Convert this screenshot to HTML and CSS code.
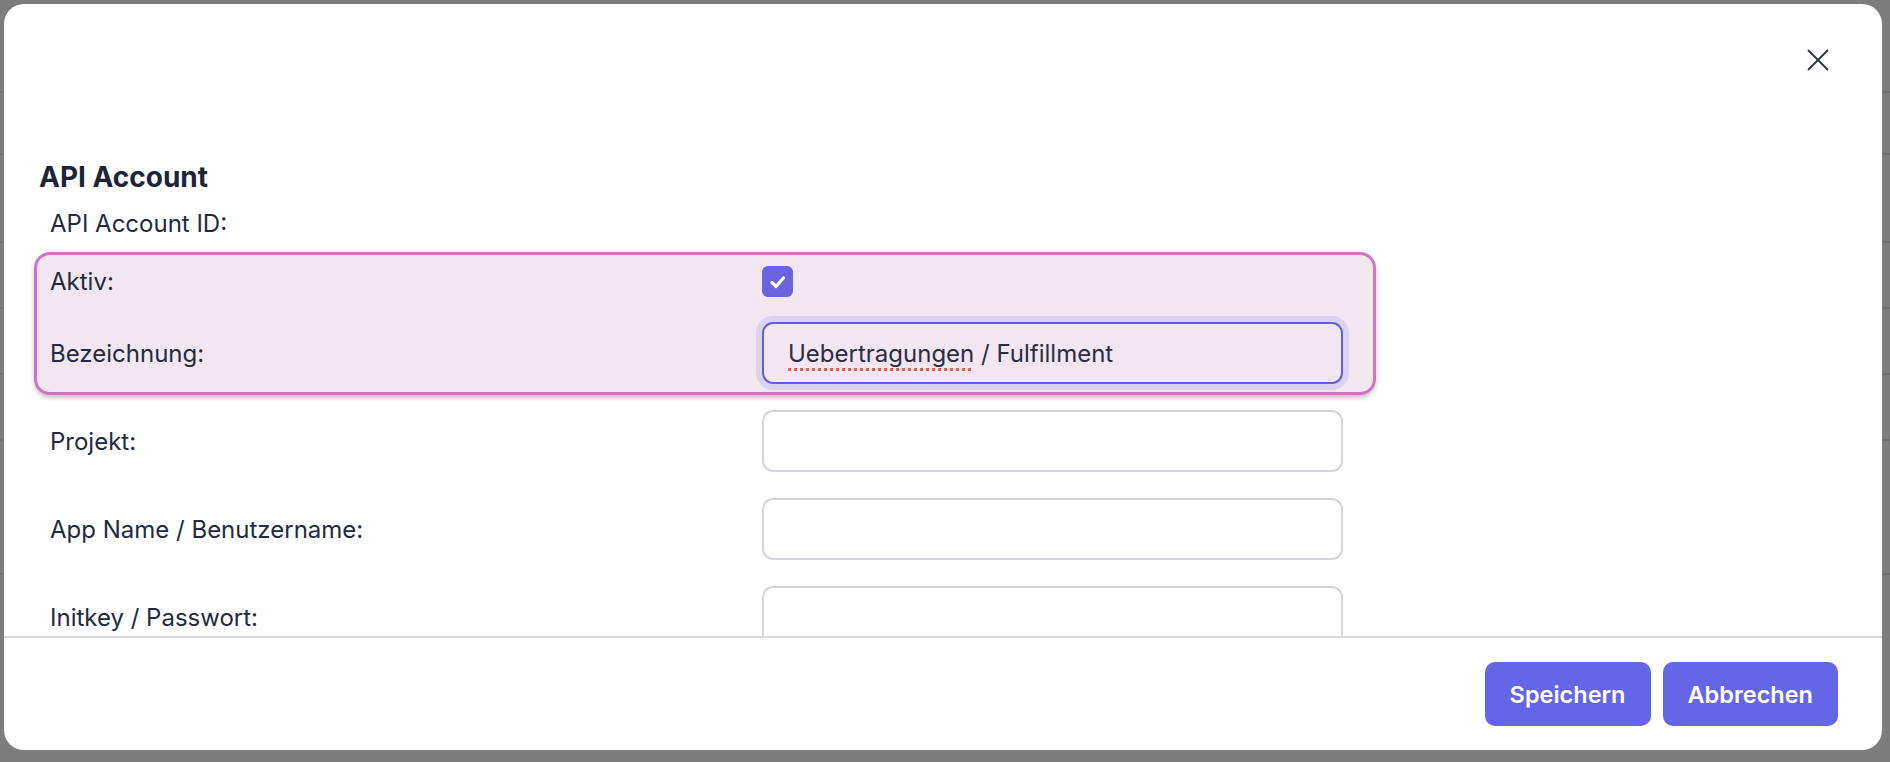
FILE: index.html
```html
<!DOCTYPE html>
<html lang="de">
<head>
    <meta charset="UTF-8">
    <meta name="viewport" content="width=device-width, initial-scale=1.0">
    <title>API Account</title>
    <link rel="stylesheet" href="styles.css">
</head>
<body>
    <div class="page-rows">
        <div class="page-row r1"></div>
        <div class="page-row r2"></div>
        <div class="page-row r3"></div>
        <div class="page-row r4"></div>
        <div class="page-row r4"></div>
        <div class="page-row r4"></div>
        <div class="page-row r5"></div>
    </div>

    <div class="overlay">
        <div class="modal">
            <div class="modal-body">
                <div class="modal-head">
                    <button class="close" aria-label="Schließen">
                        <svg width="22" height="22" viewBox="0 0 22 22">
                            <path d="M1 1L21 21M21 1L1 21" stroke="#2b3344" stroke-width="1.8" fill="none"/>
                        </svg>
                    </button>
                </div>

                <h2 class="section-title">API Account</h2>

                <div class="form">
                    <div class="row row-text">
                        <span class="label">API Account ID:</span>
                        <span></span>
                    </div>

                    <div class="group-hl">
                        <div class="row row-check">
                            <span class="label">Aktiv:</span>
                            <div class="field">
                                <span class="checkbox">
                                    <svg width="31" height="31" viewBox="0 0 31 31">
                                        <path d="M10 16.5l4 4 7.5-8.5" stroke="#fff" stroke-width="3.2" stroke-linecap="round" stroke-linejoin="round" fill="none"/>
                                    </svg>
                                </span>
                            </div>
                        </div>
                        <div class="row row-input row-last">
                            <span class="label">Bezeichnung:</span>
                            <div class="field">
                                <div class="input input-focus"><span class="misspelled">Uebertragungen</span>&nbsp;/ Fulfillment</div>
                            </div>
                        </div>
                    </div>

                    <div class="row row-input">
                        <span class="label">Projekt:</span>
                        <div class="field"><div class="input"></div></div>
                    </div>
                    <div class="row row-input">
                        <span class="label">App Name / Benutzername:</span>
                        <div class="field"><div class="input"></div></div>
                    </div>
                    <div class="row row-input">
                        <span class="label">Initkey / Passwort:</span>
                        <div class="field"><div class="input"></div></div>
                    </div>
                </div>
            </div>

            <div class="modal-foot">
                <button class="btn">Speichern</button>
                <button class="btn">Abbrechen</button>
            </div>
        </div>
    </div>
</body>
</html>
```

FILE: styles.css
```css
body {
    margin: 0;
    padding: 0;
    width: 100%;
    height: 100vh;
    background: #7d7d7d;
    font-family: Inter, "Noto Sans", sans-serif;
    overflow: hidden;
}

/* page content showing through the backdrop */
.page-rows {
    display: flex;
    flex-direction: column;
}

.page-row {
    border-bottom: 2px solid #707070;
}

.r1 { height: 91px; }
.r2 { height: 60px; }
.r3 { height: 86px; }
.r4 { height: 64px; }
.r5 { height: 132px; }

.overlay {
    position: fixed;
    inset: 0;
    padding: 4px 8px 12px 4px;
    display: flex;
}

.modal {
    flex: 1;
    background: #fff;
    border-radius: 20px;
    display: flex;
    flex-direction: column;
    overflow: hidden;
}

.modal-body {
    flex: 1;
    min-height: 0;
    overflow: hidden;
}

.modal-head {
    display: flex;
    justify-content: flex-end;
    padding: 45px 53px 0 0;
}

.close {
    width: 22px;
    height: 22px;
    padding: 0;
    border: 0;
    background: none;
    display: flex;
}

.section-title {
    margin: 88px 0 0 35px;
    font-size: 28px;
    line-height: 36px;
    font-weight: 700;
    color: #1b2537;
}

.form {
    width: 1342px;
    margin: 9px 0 0 30px;
}

.row {
    display: grid;
    grid-template-columns: 712px 581px;
    align-items: center;
    padding-left: 16px;
}

.label {
    font-size: 24px;
    color: #222a42;
}

.row-text {
    height: 40px;
    line-height: 40px;
}

.group-hl {
    margin-top: 8px;
    border: 3px solid #d274c4;
    border-radius: 16px;
    background: #f2e7f1;
    box-shadow: 0 3px 4px rgba(0, 0, 0, 0.22);
}

.group-hl .row {
    padding-left: 13px;
}

.row-check {
    height: 52px;
}

.checkbox {
    width: 31px;
    height: 31px;
    border-radius: 6px;
    background: #6b62dd;
    display: flex;
}

.row-input {
    padding-top: 15px;
    padding-bottom: 11px;
}

.row-last {
    padding-bottom: 8px;
}

.input {
    height: 62px;
    box-sizing: border-box;
    border: 2px solid #d4d6dc;
    border-radius: 11px;
    background: #fff;
    padding-left: 24px;
    display: flex;
    align-items: center;
    font-size: 24px;
    color: #2a2c44;
}

.input-focus {
    border-color: #5f5fe0;
    background: transparent;
    box-shadow: 0 0 0 6px #dcd3ee;
}

.misspelled {
    text-decoration: underline dotted #e0605c;
    text-decoration-thickness: 3px;
    text-underline-offset: 6px;
}

.modal-foot {
    height: 112px;
    border-top: 2px solid #d6d8de;
    display: flex;
    justify-content: flex-end;
    align-items: center;
    gap: 12px;
    padding-right: 44px;
}

.btn {
    height: 64px;
    padding: 0 25px;
    border: 0;
    border-radius: 10px;
    background: #6366e6;
    color: #fff;
    font-family: Inter, "Noto Sans", sans-serif;
    font-size: 23.5px;
    font-weight: 600;
}
```
